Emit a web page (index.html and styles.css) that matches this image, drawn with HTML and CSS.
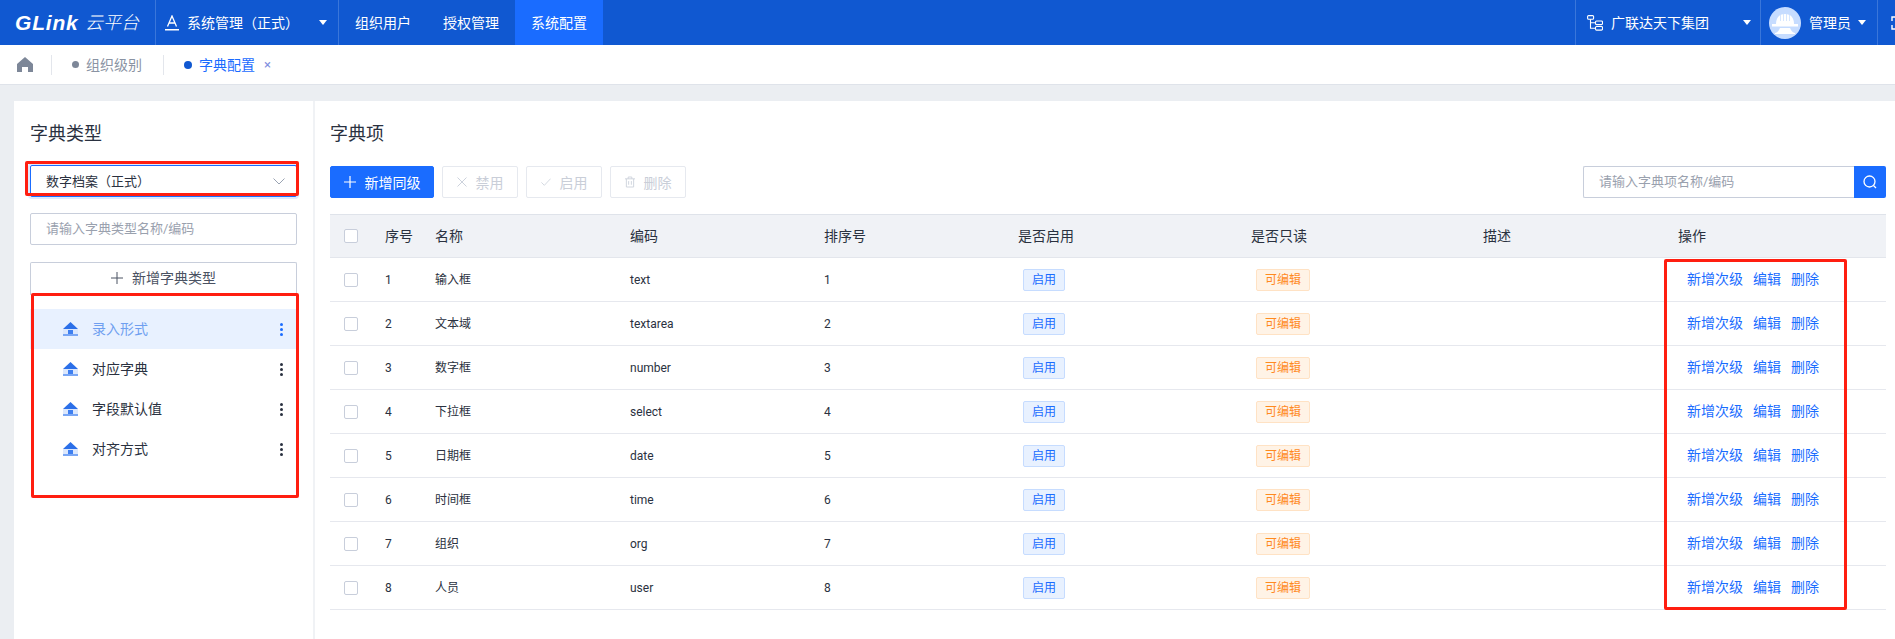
FILE: index.html
```html
<!DOCTYPE html>
<html lang="zh">
<head>
  <meta charset="UTF-8">
  <title>字典配置</title>
  <link rel="stylesheet" href="styles.css">
</head>
<body>
  <header class="topbar">
    <div class="logo"><span class="logo-en">GLink</span><span class="logo-cn">云平台</span></div>
    <div class="app-switch">
      <svg class="app-icon" viewBox="0 0 14 16"><path d="M2.5 11.5 7 1l4.500 10.500M4.200 8h5.600" fill="none" stroke="#fff" stroke-width="1.300"/><path d="M0 14h14v1.500H0z" fill="#fff"/></svg>
      <span>系统管理（正式）</span>
      <i class="caret app-caret"></i>
    </div>
    <nav class="menu">
      <a class="menu-item">组织用户</a>
      <a class="menu-item">授权管理</a>
      <a class="menu-item active">系统配置</a>
    </nav>
    <div class="top-right">
      <div class="org-switch">
        <svg class="org-icon" viewBox="0 0 16 16" fill="none" stroke="#fff" stroke-width="1.100"><rect x=".6" y=".6" width="6" height="3.600" rx="1"/><rect x="8.500" y="6" width="7" height="3.600" rx="1"/><rect x="8.500" y="11.500" width="7" height="3.600" rx="1"/><path d="M3.500 4.200v9.100h5M3.500 7.800h5"/></svg>
        <span>广联达天下集团</span>
        <i class="caret org-caret"></i>
      </div>
      <div class="user">
        <svg class="avatar" viewBox="0 0 32 32"><circle cx="16" cy="16" r="16" fill="#c6dcff"/><path d="M7 17c0-6 3-10 9-10s9 4 9 10z" fill="#fff"/><path d="M3 17h26v2.500H3zM11 21h10l1 2c1 2 3 3 4 3v1H6v-1c1 0 3-1 4-3z" fill="#fff"/><path d="M11.500 8v6M14.500 6v8M17.500 6v8M20.500 8v6" stroke="#c6dcff" stroke-width=".7"/></svg>
        <span>管理员</span>
        <i class="caret"></i>
      </div>
      <div class="fullscreen">
        <svg viewBox="0 0 14 14" fill="none" stroke="#fff" stroke-width="1.400"><path d="M1 5V1h4M9 1h4v4M13 9v4H9M5 13H1V9"/></svg>
      </div>
    </div>
  </header>

  <div class="tabs">
    <svg class="home" viewBox="0 0 16 15"><path d="M8 0 16 7v8h-5V10H5v5H0V7z" fill="#7d8798"/></svg>
    <span class="tab-sep"></span>
    <span class="tab"><i class="dot"></i>组织级别</span>
    <span class="tab-sep"></span>
    <span class="tab current"><i class="dot"></i>字典配置<b class="tab-close">×</b></span>
  </div>

  <main class="page">
    <aside class="side">
      <h2 class="panel-title">字典类型</h2>
      <div class="select">
        <span>数字档案（正式）</span>
        <svg viewBox="0 0 12 7" fill="none" stroke="#9aa3b2" stroke-width="1"><path d="M.5.500 6 6 11.500.500"/></svg>
      </div>
      <div class="input side-input">请输入字典类型名称/编码</div>
      <div class="add-type"><svg class="plus" viewBox="0 0 12 12" stroke="#4a5262" stroke-width="1"><path d="M6 0v12M0 6h12"/></svg>新增字典类型</div>
      <ul class="type-list">
        <li class="type-item selected">
          <svg class="type-icon" viewBox="0 0 15 14"><path d="M7.500 0 15 7H0z" fill="#2b6fe8"/><path d="M0 7h15v5H0z" fill="#dbe7fd"/><path d="M5 8h5v4H5z" fill="#3f7ff0"/><path d="M0 12h15v2H0z" fill="#7aa7f5"/></svg>
          <span class="type-name">录入形式</span>
          <span class="more"><i></i><i></i><i></i></span>
        </li>
        <li class="type-item">
          <svg class="type-icon" viewBox="0 0 15 14"><path d="M7.500 0 15 7H0z" fill="#2b6fe8"/><path d="M0 7h15v5H0z" fill="#dbe7fd"/><path d="M5 8h5v4H5z" fill="#3f7ff0"/><path d="M0 12h15v2H0z" fill="#7aa7f5"/></svg>
          <span class="type-name">对应字典</span>
          <span class="more"><i></i><i></i><i></i></span>
        </li>
        <li class="type-item">
          <svg class="type-icon" viewBox="0 0 15 14"><path d="M7.500 0 15 7H0z" fill="#2b6fe8"/><path d="M0 7h15v5H0z" fill="#dbe7fd"/><path d="M5 8h5v4H5z" fill="#3f7ff0"/><path d="M0 12h15v2H0z" fill="#7aa7f5"/></svg>
          <span class="type-name">字段默认值</span>
          <span class="more"><i></i><i></i><i></i></span>
        </li>
        <li class="type-item">
          <svg class="type-icon" viewBox="0 0 15 14"><path d="M7.500 0 15 7H0z" fill="#2b6fe8"/><path d="M0 7h15v5H0z" fill="#dbe7fd"/><path d="M5 8h5v4H5z" fill="#3f7ff0"/><path d="M0 12h15v2H0z" fill="#7aa7f5"/></svg>
          <span class="type-name">对齐方式</span>
          <span class="more"><i></i><i></i><i></i></span>
        </li>
      </ul>
    </aside>

    <section class="content">
      <h2 class="panel-title">字典项</h2>
      <div class="toolbar">
        <button class="btn primary"><svg viewBox="0 0 12 12" stroke="#fff" stroke-width="1.200"><path d="M6 0v12M0 6h12"/></svg>新增同级</button>
        <button class="btn"><svg viewBox="0 0 10 10" stroke="#ccd2dc" stroke-width="1"><path d="m.5.500 9 9M9.500.500l-9 9"/></svg>禁用</button>
        <button class="btn"><svg viewBox="0 0 12 10" fill="none" stroke="#ccd2dc" stroke-width="1"><path d="m.5 5.500 3.500 3.500 7.500-8"/></svg>启用</button>
        <button class="btn"><svg viewBox="0 0 11 12" fill="none" stroke="#ccd2dc" stroke-width="1"><path d="M0 2.500h11M3.500 2.500V.5h4v2M1.500 2.500v9h8v-9M4 5v4M7 5v4"/></svg>删除</button>
        <div class="search">
          <div class="input search-input">请输入字典项名称/编码</div>
          <span class="search-btn"><svg viewBox="0 0 14 14" fill="none" stroke="#fff" stroke-width="1.300"><circle cx="6.500" cy="6.500" r="5.500"/><path d="m10.500 10.500 2.500 2.500"/></svg></span>
        </div>
      </div>

      <table class="grid">
        <colgroup>
          <col class="c-check"><col class="c-seq"><col class="c-name"><col class="c-code"><col class="c-sort"><col class="c-on"><col class="c-ro"><col class="c-desc"><col class="c-op">
        </colgroup>
        <thead>
          <tr><th><i class="check"></i></th><th>序号</th><th>名称</th><th>编码</th><th>排序号</th><th>是否启用</th><th>是否只读</th><th>描述</th><th>操作</th></tr>
        </thead>
        <tbody>
          <tr><td><i class="check"></i></td><td>1</td><td>输入框</td><td>text</td><td>1</td><td><span class="tag on">启用</span></td><td><span class="tag edit">可编辑</span></td><td></td><td class="ops"><a>新增次级</a><a>编辑</a><a>删除</a></td></tr>
          <tr><td><i class="check"></i></td><td>2</td><td>文本域</td><td>textarea</td><td>2</td><td><span class="tag on">启用</span></td><td><span class="tag edit">可编辑</span></td><td></td><td class="ops"><a>新增次级</a><a>编辑</a><a>删除</a></td></tr>
          <tr><td><i class="check"></i></td><td>3</td><td>数字框</td><td>number</td><td>3</td><td><span class="tag on">启用</span></td><td><span class="tag edit">可编辑</span></td><td></td><td class="ops"><a>新增次级</a><a>编辑</a><a>删除</a></td></tr>
          <tr><td><i class="check"></i></td><td>4</td><td>下拉框</td><td>select</td><td>4</td><td><span class="tag on">启用</span></td><td><span class="tag edit">可编辑</span></td><td></td><td class="ops"><a>新增次级</a><a>编辑</a><a>删除</a></td></tr>
          <tr><td><i class="check"></i></td><td>5</td><td>日期框</td><td>date</td><td>5</td><td><span class="tag on">启用</span></td><td><span class="tag edit">可编辑</span></td><td></td><td class="ops"><a>新增次级</a><a>编辑</a><a>删除</a></td></tr>
          <tr><td><i class="check"></i></td><td>6</td><td>时间框</td><td>time</td><td>6</td><td><span class="tag on">启用</span></td><td><span class="tag edit">可编辑</span></td><td></td><td class="ops"><a>新增次级</a><a>编辑</a><a>删除</a></td></tr>
          <tr><td><i class="check"></i></td><td>7</td><td>组织</td><td>org</td><td>7</td><td><span class="tag on">启用</span></td><td><span class="tag edit">可编辑</span></td><td></td><td class="ops"><a>新增次级</a><a>编辑</a><a>删除</a></td></tr>
          <tr><td><i class="check"></i></td><td>8</td><td>人员</td><td>user</td><td>8</td><td><span class="tag on">启用</span></td><td><span class="tag edit">可编辑</span></td><td></td><td class="ops"><a>新增次级</a><a>编辑</a><a>删除</a></td></tr>
        </tbody>
      </table>
    </section>
  </main>

  <div class="mark mark-select"></div>
  <div class="mark mark-list"></div>
  <div class="mark mark-ops"></div>
</body>
</html>
```

FILE: styles.css
```css
* {
  box-sizing: border-box;
}
html, body {
  margin: 0;
  height: 639px;
  overflow: hidden;
}
body {
  position: relative;
  font-family: Roboto, "Noto Sans CJK SC", sans-serif;
  font-size: 14px;
  line-height: 20px;
  color: #2a3140;
  background-color: #ebeef2;
  text-spacing-trim: space-all;
}
i {
  font-style: normal;
}

/* 顶部导航 */
.topbar {
  display: flex;
  align-items: stretch;
  height: 45px;
  color: #fff;
  background-color: #1058d1;
}
.logo {
  display: flex;
  align-items: center;
  width: 156px;
  padding-left: 15px;
  border-right: 1px solid #3a76da;
}
.logo-en {
  width: 70px;
  font-family: "Liberation Sans", sans-serif;
  font-size: 21px;
  font-weight: bold;
  font-style: italic;
  letter-spacing: .8px;
}
.logo-cn {
  font-size: 18px;
  font-style: italic;
  font-weight: 300;
}
.app-switch {
  display: flex;
  align-items: center;
  width: 183px;
  padding-left: 9px;
  border-right: 1px solid #3a76da;
}
.app-icon {
  width: 14px;
  height: 16px;
  margin-right: 8px;
}
.app-caret {
  margin-left: 20px;
}
.caret {
  width: 0;
  height: 0;
  border-left: 4.500px solid transparent;
  border-right: 4.500px solid transparent;
  border-top: 5px solid #fff;
}
.menu {
  display: flex;
}
.menu-item {
  display: flex;
  align-items: center;
  padding: 0 16px;
}
.menu-item.active {
  background-color: #1a6cff;
}
.top-right {
  display: flex;
  margin-left: auto;
}
.org-switch {
  display: flex;
  align-items: center;
  width: 185px;
  padding-left: 11px;
  border-left: 1px solid #3a76da;
}
.org-icon {
  width: 16px;
  height: 16px;
  margin-right: 8px;
}
.org-caret {
  margin-left: 34px;
}
.user {
  display: flex;
  align-items: center;
  width: 117px;
  padding-left: 8px;
  border-left: 1px solid #3a76da;
}
.avatar {
  width: 32px;
  height: 32px;
  margin-right: 8px;
}
.user span {
  margin-right: 7px;
}
.fullscreen {
  display: flex;
  align-items: center;
  width: 18px;
  padding-left: 13px;
  overflow: hidden;
  flex-shrink: 0;
  border-left: 1px solid #3a76da;
}
.fullscreen svg {
  width: 14px;
  height: 14px;
  flex-shrink: 0;
}

/* 页签 */
.tabs {
  display: flex;
  align-items: center;
  height: 40px;
  background-color: #fff;
  border-bottom: 1px solid #dfe3ea;
}
.home {
  width: 16px;
  height: 15px;
  margin-left: 17px;
  margin-right: 18px;
}
.tab-sep {
  width: 1px;
  height: 20px;
  background-color: #e3e6ec;
}
.tab {
  display: flex;
  align-items: center;
  width: 111px;
  padding-left: 20px;
  color: #8a93a3;
}
.tab .dot {
  width: 7px;
  height: 7px;
  margin-right: 7px;
  border-radius: 50%;
  background-color: #7d8798;
}
.tab.current {
  padding-left: 20px;
  width: auto;
  color: #1a6cff;
}
.tab.current .dot {
  width: 8px;
  height: 8px;
  background-color: #1058d1;
}
.tab-close {
  margin-left: 9px;
  font-size: 13px;
  font-weight: normal;
  color: #7f8fe0;
}

/* 主体 */
.page {
  display: flex;
  height: 554px;
  margin-top: 16px;
  margin-left: 14px;
  background-color: #fff;
}
.side {
  width: 301px;
  padding: 0 16px;
  border-right: 2px solid #f0f2f5;
}
.panel-title {
  margin: 0;
  padding-top: 21px;
  font-size: 18px;
  font-weight: normal;
  line-height: 24px;
  color: #2a3140;
}
.select {
  display: flex;
  align-items: center;
  justify-content: space-between;
  height: 32px;
  margin-top: 19px;
  padding: 1px 11px 0 15px;
  font-size: 13px;
  border: 1px solid #1a6cff;
  border-radius: 2px;
  box-shadow: 0 0 0 2px rgba(26, 108, 255, .15);
}
.select svg {
  width: 12px;
  height: 7px;
}
.input {
  height: 32px;
  padding: 0 15px;
  font-size: 13px;
  line-height: 30px;
  color: #9aa1ae;
  border: 1px solid #c8cedb;
  border-radius: 2px;
}
.side-input {
  margin-top: 16px;
}
.add-type {
  display: flex;
  align-items: center;
  justify-content: center;
  height: 33px;
  margin-top: 17px;
  padding-bottom: 2px;
  color: #4a5262;
  border: 1px solid #c8cedb;
  border-bottom: 0;
  border-radius: 2px 2px 0 0;
}
.plus {
  width: 12px;
  height: 12px;
  margin-right: 9px;
}
.type-list {
  margin: 14px 0 0;
  padding: 0;
  list-style: none;
}
.type-item {
  display: flex;
  align-items: center;
  height: 40px;
  padding: 0 14px 0 33px;
}
.type-item.selected {
  color: #6f9ff0;
  background-color: #e8f1ff;
}
.type-icon {
  width: 15px;
  height: 14px;
  margin-right: 14px;
}
.type-name {
  flex: 1;
}
.more {
  display: flex;
  flex-direction: column;
  gap: 2px;
  width: 3px;
}
.more i {
  width: 3px;
  height: 3px;
  border-radius: 50%;
  background-color: #2a3140;
}
.selected .more i {
  background-color: #1a6cff;
}

.content {
  flex: 1;
  padding: 0 9px 0 15px;
}
.toolbar {
  display: flex;
  gap: 8px;
  margin-top: 20px;
}
.btn {
  display: flex;
  align-items: center;
  justify-content: center;
  width: 76px;
  height: 32px;
  padding: 0;
  font-family: inherit;
  font-size: 14px;
  color: #c9ced8;
  background-color: #fff;
  border: 1px solid #e6e9ef;
  border-radius: 2px;
}
.btn svg {
  width: 10px;
  height: 12px;
  margin-right: 9px;
}
.btn.primary {
  width: 104px;
  color: #fff;
  background-color: #1a6cff;
  border-color: #1a6cff;
}
.btn.primary svg {
  width: 12px;
  margin-right: 9px;
}
.search {
  display: flex;
  margin-left: auto;
}
.search-input {
  width: 271px;
  border-right: 0;
  border-radius: 2px 0 0 2px;
}
.search-btn {
  display: flex;
  align-items: center;
  justify-content: center;
  width: 32px;
  height: 32px;
  background-color: #1a6cff;
  border-radius: 0 2px 2px 0;
}
.search-btn svg {
  width: 14px;
  height: 14px;
}

/* 表格 */
.grid {
  width: 100%;
  margin-top: 16px;
  table-layout: fixed;
  border-collapse: separate;
  border-spacing: 0;
}
.c-check { width: 45px; }
.c-seq { width: 50px; }
.c-name { width: 195px; }
.c-code { width: 194px; }
.c-sort { width: 194px; }
.c-on { width: 233px; }
.c-ro { width: 232px; }
.c-desc { width: 195px; }
.grid th {
  height: 44px;
  padding: 0 0 0 10px;
  font-weight: normal;
  text-align: left;
  background-color: #f0f2f6;
  border-top: 1px solid #dfe3ea;
  border-bottom: 1px solid #e3e6ec;
}
.grid td {
  height: 44px;
  padding: 0 0 0 10px;
  font-size: 12px;
  border-bottom: 1px solid #e6e8ee;
}
.grid th:first-child,
.grid td:first-child {
  padding-left: 14px;
}
.check {
  display: block;
  width: 14px;
  height: 14px;
  background-color: #fff;
  border: 1px solid #c8cedb;
  border-radius: 2px;
}
.tag {
  display: inline-block;
  height: 22px;
  margin-left: 5px;
  padding: 0 8px;
  font-size: 12px;
  line-height: 20px;
  border-radius: 2px;
  vertical-align: middle;
}
.tag.on {
  color: #1a6cff;
  background-color: #e8f1ff;
  border: 1px solid #c6dcff;
}
.tag.edit {
  color: #ff8a1f;
  background-color: #fff3e6;
  border: 1px solid #ffe2c4;
}
.grid td.ops {
  padding-left: 19px;
  padding-bottom: 2px;
  font-size: 14px;
}
.ops a {
  margin-right: 10px;
  color: #1a6cff;
}

/* 红色标注框 */
.mark {
  position: absolute;
  border: 3px solid #ff1e10;
  border-radius: 2px;
}
.mark-select {
  left: 25px;
  top: 161px;
  width: 274px;
  height: 35px;
}
.mark-list {
  left: 31px;
  top: 293px;
  width: 268px;
  height: 205px;
}
.mark-ops {
  left: 1664px;
  top: 259px;
  width: 183px;
  height: 351px;
}
```
